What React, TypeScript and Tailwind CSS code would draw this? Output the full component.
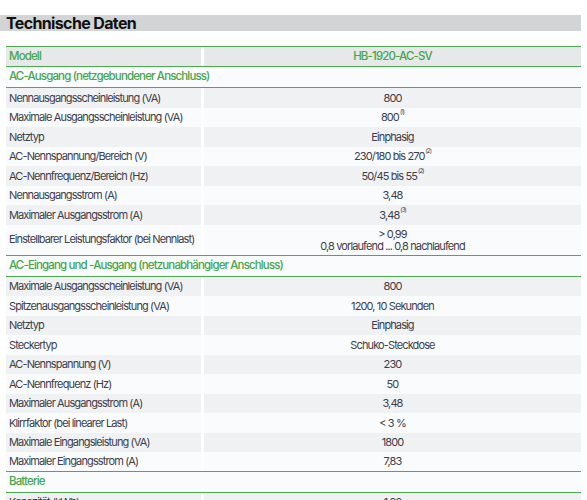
import React from "react";

type Row =
  | { kind: "section"; label: string }
  | { kind: "data"; label: string; value: React.ReactNode; sup?: string; tall?: boolean; last?: boolean };

const rows: Row[] = [
  { kind: "section", label: "AC-Ausgang (netzgebundener Anschluss)" },
  { kind: "data", label: "Nennausgangsscheinleistung (VA)", value: "800" },
  { kind: "data", label: "Maximale Ausgangsscheinleistung (VA)", value: "800", sup: "(1)" },
  { kind: "data", label: "Netztyp", value: "Einphasig" },
  { kind: "data", label: "AC-Nennspannung/Bereich (V)", value: "230/180 bis 270", sup: "(2)" },
  { kind: "data", label: "AC-Nennfrequenz/Bereich (Hz)", value: "50/45 bis 55", sup: "(2)" },
  { kind: "data", label: "Nennausgangsstrom (A)", value: "3,48" },
  { kind: "data", label: "Maximaler Ausgangsstrom (A)", value: "3,48", sup: "(3)" },
  {
    kind: "data",
    label: "Einstellbarer Leistungsfaktor (bei Nennlast)",
    value: (
      <>
        <span className="block">&gt; 0,99</span>
        <span className="block">0,8 vorlaufend ... 0,8 nachlaufend</span>
      </>
    ),
    tall: true,
    last: true,
  },
  { kind: "section", label: "AC-Eingang und -Ausgang (netzunabhängiger Anschluss)" },
  { kind: "data", label: "Maximale Ausgangsscheinleistung (VA)", value: "800" },
  { kind: "data", label: "Spitzenausgangsscheinleistung (VA)", value: "1200, 10 Sekunden" },
  { kind: "data", label: "Netztyp", value: "Einphasig" },
  { kind: "data", label: "Steckertyp", value: "Schuko-Steckdose" },
  { kind: "data", label: "AC-Nennspannung (V)", value: "230" },
  { kind: "data", label: "AC-Nennfrequenz (Hz)", value: "50" },
  { kind: "data", label: "Maximaler Ausgangsstrom (A)", value: "3,48" },
  { kind: "data", label: "Klirrfaktor (bei linearer Last)", value: "< 3 %" },
  { kind: "data", label: "Maximale Eingangsleistung (VA)", value: "1800" },
  { kind: "data", label: "Maximaler Eingangsstrom (A)", value: "7,83", last: true },
  { kind: "section", label: "Batterie" },
  { kind: "data", label: "Kapazität (kWh)", value: "1,92" },
];

export default function App() {
  let idx = 0;
  return (
    <div
      className="w-[587px] h-[500px] overflow-hidden bg-white text-[#3d404b]"
      style={{ fontFamily: "Inter, 'Noto Sans', sans-serif" }}
    >
      <div className="h-[15px]" />
      <div className="w-[581px] h-[16px] bg-[#d2d4d6] pl-[6px] text-[16px] font-bold leading-[17px] text-[#111] tracking-[-0.04em] whitespace-nowrap">
        Technische Daten
      </div>
      <div className="h-[15px]" />
      <div className="ml-[6px] w-[575px] text-[11px] tracking-[-0.08em] whitespace-nowrap">
        <div className="flex h-[21px] border-t border-b border-[#4caa50] text-[#45a64c] font-medium text-[11.5px] tracking-[-0.075em]">
          <div className="w-[195px] bg-[#e7e8e9] pl-[3px] flex items-center">Modell</div>
          <div className="w-[3px] bg-white" />
          <div className="flex-1 bg-[#e7e8e9] flex items-center justify-center">HB-1920-AC-SV</div>
        </div>
        {rows.map((r, i) => {
          if (r.kind === "section") {
            idx = 0;
            return (
              <div
                key={i}
                className="h-[21px] border-b border-[#4caa50] bg-[#fafbfc] pl-[3px] flex items-center text-[#45a64c] font-medium text-[11.5px] tracking-[-0.075em]"
              >
                {r.label}
              </div>
            );
          }
          const gray = idx % 2 === 0;
          idx++;
          const bg = gray ? "bg-[#f0f1f2]" : "bg-[#fafbfc]";
          return (
            <div
              key={i}
              className={`flex ${r.tall ? "h-[31px]" : "h-[19.5px]"} ${r.last ? "border-b border-[#4caa50]" : ""}`}
            >
              <div className={`w-[195px] ${bg} pl-[3px] flex items-center`}>{r.label}</div>
              <div className="w-[3px] bg-white" />
              <div className={`flex-1 ${bg} flex flex-col items-center justify-center text-center leading-[12px]`}>
                {typeof r.value === "string" ? (
                  <span>
                    {r.value}
                    {r.sup && <sup className="text-[6px] ml-[1px] align-top relative top-[1px]">{r.sup}</sup>}
                  </span>
                ) : (
                  r.value
                )}
              </div>
            </div>
          );
        })}
      </div>
    </div>
  );
}
